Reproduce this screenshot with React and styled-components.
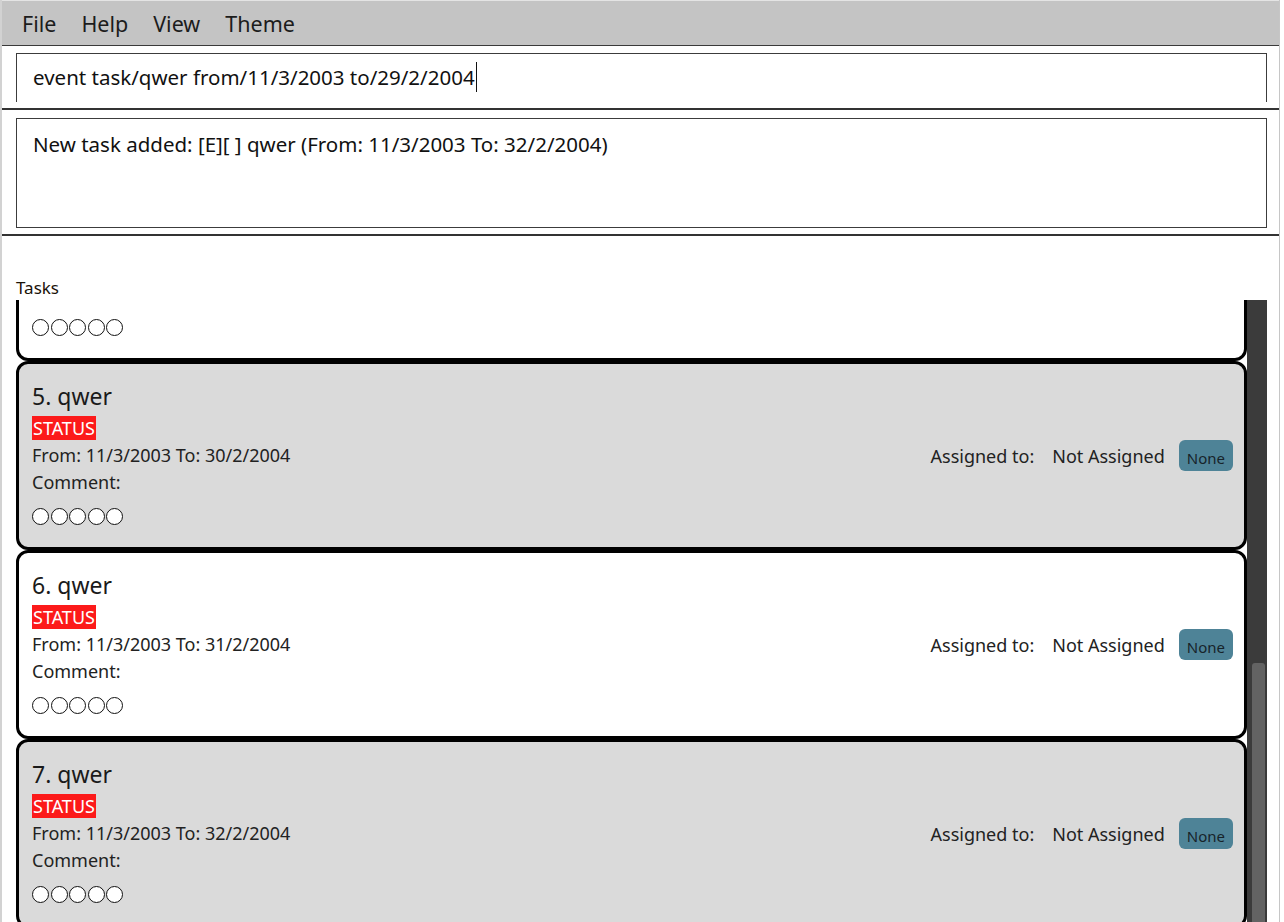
import React from "react";
import styled, { createGlobalStyle } from "styled-components";

const GlobalStyle = createGlobalStyle`
  html, body {
    margin: 0;
    padding: 0;
    background: #ffffff;
  }
  body {
    font-family: "Noto Sans", "Open Sans", sans-serif;
    color: #1f1f1f;
  }
`;

const tasks = [
  { id: 4, to: "29/2/2004", shade: false },
  { id: 5, to: "30/2/2004", shade: true },
  { id: 6, to: "31/2/2004", shade: false },
  { id: 7, to: "32/2/2004", shade: true },
];

const App = () => {
  return (
    <>
      <GlobalStyle />
      <Window>
        <MenuBar>
          <MenuItem>File</MenuItem>
          <MenuItem>Help</MenuItem>
          <MenuItem>View</MenuItem>
          <MenuItem>Theme</MenuItem>
        </MenuBar>

        <CommandPane>
          <CommandBox>
            event task/qwer from/11/3/2003 to/29/2/2004
            <Caret />
          </CommandBox>
        </CommandPane>

        <ResultPane>
          <ResultBox>
            New task added: [E][ ] qwer (From: 11/3/2003 To: 32/2/2004)
          </ResultBox>
        </ResultPane>

        <TasksPane>
          <TasksLabel>Tasks</TasksLabel>
          <ListArea>
            <Viewport>
              <CardList $offset={128}>
                {tasks.map((t) => (
                  <Card key={t.id} $shade={t.shade}>
                    <Info>
                      <Title>{t.id}. qwer</Title>
                      <Status>STATUS</Status>
                      <Line>From: 11/3/2003 To: {t.to}</Line>
                      <Line>Comment:</Line>
                      <Circles>
                        {[0, 1, 2, 3, 4].map((i) => (
                          <Circle key={i} />
                        ))}
                      </Circles>
                    </Info>
                    <Assign>
                      <AssignText>Assigned to:</AssignText>
                      <AssignText>Not Assigned</AssignText>
                      <Tag>None</Tag>
                    </Assign>
                  </Card>
                ))}
              </CardList>
            </Viewport>
            <Scrollbar>
              <Thumb />
            </Scrollbar>
          </ListArea>
        </TasksPane>
      </Window>
    </>
  );
};

export default App;

const Window = styled.div`
  width: 1280px;
  height: 922px;
  box-sizing: border-box;
  border-left: 2px solid #d2d2d2;
  border-right: 1px solid #c6c6c6;
  display: flex;
  flex-direction: column;
  overflow: hidden;
`;

const MenuBar = styled.div`
  height: 44px;
  background: #c4c4c4;
  border-top: 1px solid #e4e4e4;
  border-bottom: 1px solid #3a3a3a;
  display: flex;
  align-items: center;
  padding-left: 20px;
  gap: 25px;
`;

const MenuItem = styled.span`
  font-size: 21.5px;
  color: #1c1c1c;
`;

const CommandPane = styled.div`
  height: 64px;
  box-sizing: border-box;
  padding: 7px 12px 0 14px;
  border-bottom: 2px solid #333333;
`;

const CommandBox = styled.div`
  height: 49px;
  box-sizing: border-box;
  border: 1px solid #3c3c3c;
  border-bottom: none;
  padding-left: 16px;
  display: flex;
  align-items: center;
  font-size: 20.5px;
  color: #111;
  padding-bottom: 2px;
`;

const Caret = styled.span`
  display: inline-block;
  width: 1px;
  height: 30px;
  background: #111;
  margin-left: 1px;
`;

const ResultPane = styled.div`
  height: 126px;
  box-sizing: border-box;
  padding: 8px 12px 0 14px;
  border-bottom: 2px solid #333333;
`;

const ResultBox = styled.div`
  height: 110px;
  box-sizing: border-box;
  border: 1px solid #3c3c3c;
  padding: 11px 16px;
  font-size: 20.5px;
  line-height: 28px;
  color: #111;
`;

const TasksPane = styled.div`
  flex: 1;
  min-height: 0;
  display: flex;
  flex-direction: column;
  padding: 42px 12px 0 14px;
`;

const TasksLabel = styled.div`
  font-size: 17px;
  line-height: 20px;
  height: 22px;
  color: #1a1208;
`;

const ListArea = styled.div`
  flex: 1;
  min-height: 0;
  display: flex;
`;

const Viewport = styled.div`
  flex: 1;
  overflow: hidden;
`;

const CardList = styled.div`
  margin-top: ${(p) => -p.$offset}px;
  display: flex;
  flex-direction: column;
`;

const Card = styled.div`
  height: 189px;
  box-sizing: border-box;
  border: 3px solid #000;
  border-radius: 12px;
  background: ${(p) => (p.$shade ? "#dadada" : "#ffffff")};
  padding: 16px 11px 0 13px;
  display: flex;
  justify-content: space-between;
  align-items: flex-start;
`;

const Info = styled.div`
  display: flex;
  flex-direction: column;
  align-items: flex-start;
`;

const Title = styled.div`
  font-size: 23px;
  line-height: 32px;
  color: #1a1a1a;
`;

const Status = styled.div`
  margin: 4px 0 2px;
  height: 24px;
  line-height: 24px;
  padding: 0 1px;
  background: #fc1a1a;
  color: #ffffff;
  font-size: 18px;
`;

const Line = styled.div`
  font-size: 18px;
  line-height: 27px;
  color: #222;
`;

const Circles = styled.div`
  margin-top: 12px;
  display: flex;
  gap: 1.5px;
`;

const Circle = styled.span`
  width: 17px;
  height: 17px;
  box-sizing: border-box;
  border: 1.5px solid #111;
  border-radius: 50%;
  background: #fff;
`;

const Assign = styled.div`
  margin-top: 60px;
  display: flex;
  align-items: center;
  gap: 18px;
`;

const AssignText = styled.span`
  font-size: 18px;
  color: #222;
`;

const Tag = styled.span`
  margin-left: -4px;
  height: 31px;
  box-sizing: border-box;
  padding: 6px 8px 0;
  border-radius: 6px;
  background: #4e8397;
  color: #17232a;
  font-size: 15px;
  line-height: 25px;
`;

const Scrollbar = styled.div`
  width: 20px;
  background: #3b3b3b;
  display: flex;
  flex-direction: column;
  justify-content: flex-end;
  align-items: flex-end;
  padding-right: 2px;
  box-sizing: border-box;
`;

const Thumb = styled.div`
  width: 13px;
  height: 259px;
  background: #636363;
  border-radius: 3px 3px 0 0;
`;
